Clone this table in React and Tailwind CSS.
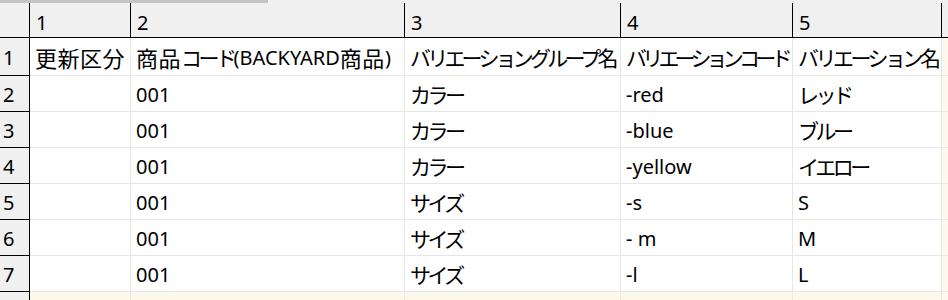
const cols = ['1', '2', '3', '4', '5']

// katakana in the reference font is set tighter than full width
const K = ({ t, tr = 'tracking-[-3.5px]' }) => <span className={`text-[21px] ${tr}`}>{t}</span>
const J = ({ t }) => <span className="tracking-[0.5px]">{t}</span>
const L = ({ t }) => <span className="text-[20px]">{t}</span>

const rows = [
  [
    <J t="更新区分" />,
    <>
      <J t="商品" />
      <K t="コード" />
      <L t="(BACKYARD" />
      <J t="商品" />
      <L t=")" />
    </>,
    <K t="バリエーショングループ名" tr="tracking-[-3.8px]" />,
    <K t="バリエーションコード" tr="tracking-[-4.8px]" />,
    <K t="バリエーション名" />,
  ],
  ['', <L t="001" />, <K t="カラー" />, <L t="-red" />, <K t="レッド" />],
  ['', <L t="001" />, <K t="カラー" />, <L t="-blue" />, <K t="ブルー" />],
  ['', <L t="001" />, <K t="カラー" />, <L t="-yellow" />, <K t="イエロー" />],
  ['', <L t="001" />, <K t="サイズ" />, <L t="-s" />, <L t="S" />],
  ['', <L t="001" />, <K t="サイズ" />, <L t="- m" />, <L t="M" />],
  ['', <L t="001" />, <K t="サイズ" />, <L t="-l" />, <L t="L" />],
]

const grid = 'grid grid-cols-[30px_101px_274px_216px_172px_149px_1fr]'

export default function App() {
  return (
    <div className="w-[948px] h-[300px] overflow-hidden bg-white text-black text-[22px] leading-none [font-family:'Noto_Sans','Noto_Sans_CJK_JP',sans-serif]">
      {/* scrollbar strip */}
      <div className="flex h-[3px] bg-[#f0f0f0]">
        <div className="w-[268px] bg-[#c4c4c4]" />
      </div>

      {/* column header */}
      <div className={`${grid} h-[35px] bg-[#f0f0f0] border-b border-black text-[20px]`}>
        <div className="border-r border-black" />
        {cols.map((c) => (
          <div key={c} className="flex items-center pt-[5px] px-[6px] border-r border-black">
            {c}
          </div>
        ))}
        <div />
      </div>

      {/* rows */}
      {rows.map((r, i) => (
        <div key={i} className={`${grid} ${i === 0 ? 'h-[38px]' : 'h-[36px]'}`}>
          <div className="flex items-center pt-[3px] px-[3px] bg-[#f0f0f0] border-r border-b border-black text-[20px]">
            {i + 1}
          </div>
          {r.map((t, j) => (
            <div key={j} className="flex items-center pt-[3px] px-[5px] whitespace-nowrap overflow-hidden border-r border-b border-[#e6e6e6]">
              {t}
            </div>
          ))}
          <div className="bg-[#fdf8ee] border-b border-[#efe9dd]" />
        </div>
      ))}

      {/* empty row */}
      <div className={`${grid} h-[36px]`}>
        <div className="bg-[#f0f0f0] border-r border-black" />
        {cols.map((c) => (
          <div key={c} className="bg-[#fdf8ee] border-r border-[#efe9dd]" />
        ))}
        <div className="bg-[#fdf8ee]" />
      </div>
    </div>
  )
}
